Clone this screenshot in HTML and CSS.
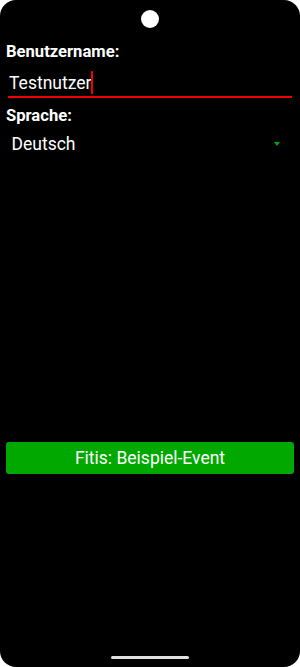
FILE: index.html
```html
<!DOCTYPE html>
<html lang="de">
<head>
<meta charset="utf-8">
<title>Fitis</title>
<link rel="stylesheet" href="styles.css">
</head>
<body>
<div class="screen">
  <div class="camera"></div>
  <div class="label label-user">Benutzername:</div>
  <div class="input"><span class="input-text">Testnutzer</span><span class="caret"></span></div>
  <div class="label label-lang">Sprache:</div>
  <div class="spinner">
    <span class="spinner-text">Deutsch</span>
    <span class="spinner-arrow"></span>
  </div>
  <div class="button">Fitis: Beispiel-Event</div>
  <div class="home-indicator"></div>
</div>
</body>
</html>
```
FILE: styles.css
```css
html, body {
  margin: 0;
  padding: 0;
  background: #ffffff;
}

body {
  font-family: Roboto, "Noto Sans", "Liberation Sans", sans-serif;
  color: #ffffff;
}

.screen {
  width: 300px;
  height: 667px;
  box-sizing: border-box;
  background: #000000;
  border-radius: 16px;
  padding: 0 6px;
  display: flex;
  flex-direction: column;
  overflow: hidden;
}

.camera {
  align-self: center;
  width: 18px;
  height: 18px;
  border-radius: 50%;
  background: #ffffff;
  margin-top: 10px;
}

.label {
  font-size: 16.6px;
  font-weight: 700;
  line-height: 19px;
}

.label-user {
  margin-top: 14px;
}

.label-lang {
  margin-top: 8.5px;
}

.input {
  margin: 11.7px 2px 0 2px;
  padding: 0 0 2px 1px;
  border-bottom: 2px solid #f00000;
  font-size: 17.5px;
  line-height: 20px;
}

.caret {
  display: inline-block;
  width: 1.6px;
  height: 23px;
  background: #f00000;
  vertical-align: -5px;
  margin-top: -3px;
}

.spinner {
  margin-top: 9px;
  display: flex;
  align-items: center;
  justify-content: space-between;
  padding-left: 5.5px;
  padding-right: 14px;
  font-size: 17.5px;
  line-height: 20px;
}

.spinner-arrow {
  width: 0;
  height: 0;
  border-left: 3.5px solid transparent;
  border-right: 3.5px solid transparent;
  border-top: 4px solid #00a800;
}

.button {
  margin-top: 287.5px;
  background: #00a800;
  border-radius: 3px;
  text-align: center;
  font-size: 17.5px;
  line-height: 32px;
  height: 32px;
}

.home-indicator {
  align-self: center;
  margin-top: auto;
  margin-bottom: 8px;
  width: 78px;
  height: 3px;
  border-radius: 2px;
  background: #e0e0e0;
}
```
